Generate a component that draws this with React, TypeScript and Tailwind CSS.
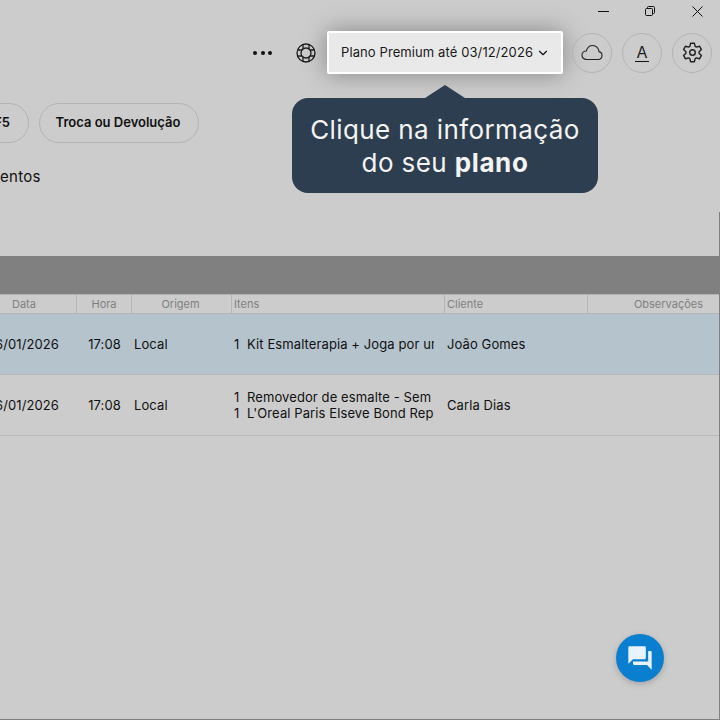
import React from 'react';
import { ChevronDown } from 'lucide-react';

const columns = [
  { label: 'Hora', className: 'w-[55px] justify-center' },
  { label: 'Origem', className: 'w-[100px] justify-center pr-[2px]' },
  { label: 'Itens', className: 'w-[213px] pl-[2px]' },
  { label: 'Cliente', className: 'w-[143px] pl-[2px]' },
];

const rows = [
  { items: ['Kit Esmalterapia + Joga por um dia inteiro'], client: 'João Gomes', selected: true },
  { items: ['Removedor de esmalte - Sem acetona', "L'Oreal Paris Elseve Bond Repair Shampoo"], client: 'Carla Dias', selected: false },
];

// six-lobed cog outline, as in the toolbar of the reference
const gearPath = Array.from({ length: 6 }, (_, i) => {
  const base = -90 + i * 60;
  const pt = (deg: number, r: number) => {
    const a = ((base + deg) * Math.PI) / 180;
    return `${(10.5 + r * Math.cos(a)).toFixed(2)} ${(10.5 + r * Math.sin(a)).toFixed(2)}`;
  };
  return `${i === 0 ? 'M' : 'L'}${pt(-12, 9.4)} L${pt(12, 9.4)} L${pt(24, 6.6)} L${pt(36, 6.6)}`;
}).join(' ') + ' Z';

function CircleButton({ children }: { children: React.ReactNode }) {
  return (
    <button className="w-10 h-10 shrink-0 rounded-full border border-[#b4b4b4] flex items-center justify-center text-[#222]">
      {children}
    </button>
  );
}

function RestoreIcon() {
  return (
    <svg width="12" height="12" viewBox="0 0 12 12" fill="none" stroke="#111" strokeWidth="1">
      <rect x="1.5" y="3.5" width="7" height="7" rx="1" />
      <path d="M3.5 3.5V2.5a1 1 0 0 1 1-1h5a1 1 0 0 1 1 1v5a1 1 0 0 1-1 1h-1" />
    </svg>
  );
}

function LifeRingIcon() {
  return (
    <svg width="20" height="20" viewBox="0 0 20 20" fill="none" stroke="#1c1c1c" strokeWidth="1.3" className="mr-[11px]">
      <circle cx="10" cy="10" r="9" />
      <circle cx="10" cy="10" r="5" />
      <path d="M7 1.500v4.500M13 1.500v4.500M7 14v4.500M13 14v4.500M1.500 7h4.500M1.500 13h4.500M14 7h4.500M14 13h4.500" />
    </svg>
  );
}

function CloudIcon() {
  return (
    <svg width="22" height="17" viewBox="0 0 22 17" fill="none" stroke="#222" strokeWidth="1.1">
      <path d="M5.5 15.5C3 15.5 1 13.6 1 11.2 1 8.9 3 7 5.3 7 6.3 3.4 9 1.5 11.7 1.5c3.6 0 6.100 2.800 6.300 6.100 2 .4 3 2.100 3 4 0 2.200-1.700 3.900-4 3.900Z" />
    </svg>
  );
}

function GearIcon() {
  return (
    <svg width="21" height="21" viewBox="0 0 21 21" fill="none" stroke="#222" strokeWidth="1.4" strokeLinejoin="round">
      <path d={gearPath} />
      <circle cx="10.500" cy="10.500" r="2.800" />
    </svg>
  );
}

function ChatIcon() {
  return (
    <svg width="28" height="28" viewBox="0 0 24 24" fill="#e8f3fb">
      <path d="M21 6h-2v9H6v2c0 .55.45 1 1 1h11l4 4V7c0-.55-.45-1-1-1zm-4 6V3c0-.55-.45-1-1-1H3c-.55 0-1 .45-1 1v14l4-4h10c.55 0 1-.45 1-1z" />
    </svg>
  );
}

export default function App() {
  return (
    <div className="relative w-[720px] h-[720px] overflow-hidden bg-[#cccccc] text-[#111] font-['Inter',sans-serif] border-b border-[#808080]">
      {/* Window controls */}
      <div className="h-[31px] flex items-start justify-end">
        <div className="w-[46px] h-[22px] flex items-center justify-center mr-[1px]"><span className="w-[11px] h-px bg-[#111]" /></div>
        <div className="w-[46px] h-[22px] flex items-center justify-center mr-[1px]"><RestoreIcon /></div>
        <div className="w-[46px] h-[22px] flex items-center justify-center">
          <svg width="11" height="11" viewBox="0 0 11 11" stroke="#111" strokeWidth="1"><path d="M.5.5l10 10M10.500.5l-10 10" /></svg>
        </div>
      </div>

      {/* Toolbar */}
      <div className="h-[43px] flex items-center justify-end pr-2">
        <div className="flex gap-[3.5px] mr-[24px]">
          <span className="w-1 h-1 rounded-full bg-[#111]" />
          <span className="w-1 h-1 rounded-full bg-[#111]" />
          <span className="w-1 h-1 rounded-full bg-[#111]" />
        </div>
        <LifeRingIcon />
        <button className="w-[236px] h-[43px] shrink-0 flex items-center pl-[12px] gap-[3px] bg-[#e9e9e9] border-2 border-white rounded-[2px] text-[13px] tracking-[0.1px] text-[#1a1a1a] shadow-[0_0_24px_rgba(0,0,0,0.35)] mr-[9px]">
          Plano Premium até 03/12/2026
          <ChevronDown size={14} strokeWidth={2} color="#111" />
        </button>
        <div className="flex gap-[10px]">
          <CircleButton><CloudIcon /></CircleButton>
          <CircleButton>
            <span className="text-[16px] leading-[18px] border-b border-[#111] px-[1px]">A</span>
          </CircleButton>
          <CircleButton><GearIcon /></CircleButton>
        </div>
      </div>

      {/* Action pills */}
      <div className="mt-[29px] flex gap-[10px] -ml-[60px]">
        <button className="w-[89px] h-10 rounded-full border border-[#b4b4b4] text-[13px] font-semibold text-right pr-[18px]">F5</button>
        <button className="w-[160px] h-10 rounded-full border border-[#b4b4b4] text-[13px] font-semibold pr-[2px]">Troca ou Devolução</button>
      </div>

      <div className="mt-[25px] h-[18px] text-[15px] leading-[18px] tracking-[0.3px]">entos</div>

      {/* Section bar */}
      <div className="mt-[70px] h-[38px] bg-[#808080]" />

      {/* Table header */}
      <div className="h-5 flex border-y border-[#b5b5b5] text-[11px] text-[#808080]">
        <div className="w-[77px] shrink-0 flex items-center pl-[12px] border-r border-[#b5b5b5]">Data</div>
        {columns.map((c) => (
          <div key={c.label} className={`${c.className} shrink-0 flex items-center border-r border-[#b5b5b5]`}>{c.label}</div>
        ))}
        <div className="flex-1 flex items-center justify-end pr-[17px]">Observações</div>
      </div>

      {/* Table rows */}
      {rows.map((row) => (
        <div
          key={row.client}
          className={`h-[61px] flex items-center border-b border-[#b9b9b9] text-[13px] leading-4 tracking-[0.1px] ${row.selected ? 'bg-[#b5c3cd]' : ''}`}
        >
          <div className="w-[77px] shrink-0 flex justify-end overflow-hidden whitespace-nowrap pr-[18px]">6/01/2026</div>
          <div className="w-[55px] shrink-0 text-center">17:08</div>
          <div className="w-[100px] shrink-0 pl-[2px]">Local</div>
          <div className="w-[213px] shrink-0 flex flex-col pl-[2px] pr-[11px]">
            {row.items.map((item) => (
              <div key={item} className="flex whitespace-nowrap overflow-hidden">
                <span className="w-[13px] shrink-0">1</span>
                <span className="overflow-hidden">{item}</span>
              </div>
            ))}
          </div>
          <div className="pl-[2px]">{row.client}</div>
        </div>
      ))}

      {/* Right window edge */}
      <div className="absolute right-0 top-[212px] bottom-0 w-px bg-[#808080]" />

      {/* Tooltip */}
      <div className="absolute left-[292px] top-[98px] w-[306px] h-[95px] rounded-[16px] bg-[#2d3e50] flex flex-col items-center justify-center text-[26px] leading-[33px] text-[#f4f4f4] tracking-[0.4px]">
        <span className="absolute -top-[13px] left-[133px] w-0 h-0 border-x-[20px] border-x-transparent border-b-[13px] border-b-[#2d3e50]" />
        <div>Clique na informação</div>
        <div>do seu <b className="font-bold tracking-[0.6px]">plano</b></div>
      </div>

      {/* Chat button */}
      <button className="absolute left-[616px] top-[634px] w-12 h-12 rounded-full bg-[#0a7fd0] flex items-center justify-center shadow-[0_2px_6px_rgba(0,0,0,0.2)]">
        <ChatIcon />
      </button>
    </div>
  );
}
